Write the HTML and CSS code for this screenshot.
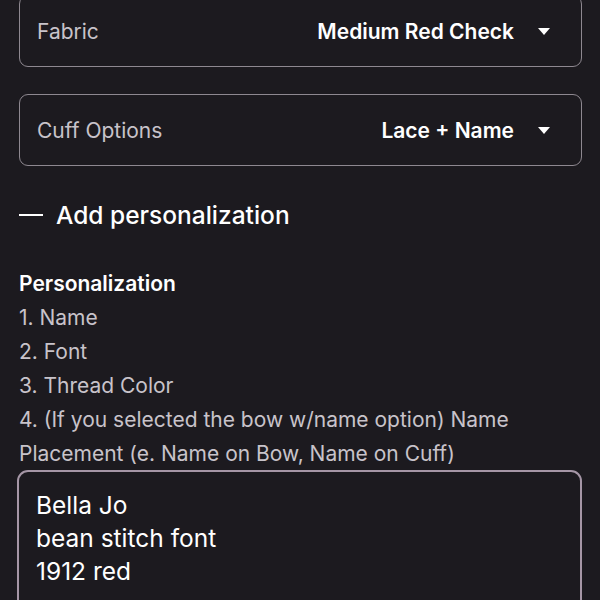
FILE: index.html
```html
<!DOCTYPE html>
<html>
<head>
<meta charset="utf-8">
<link rel="stylesheet" href="styles.css">
</head>
<body>
<div class="page">
  <div class="select first">
    <span class="label">Fabric</span>
    <span class="value">Medium Red Check<span class="caret"></span></span>
  </div>
  <div class="select">
    <span class="label">Cuff Options</span>
    <span class="value">Lace + Name<span class="caret"></span></span>
  </div>
  <div class="toggle">
    <span class="dash"></span>
    <span class="toggle-text">Add personalization</span>
  </div>
  <div class="field-title">Personalization</div>
  <div class="instructions">
    <div>1. Name</div>
    <div>2. Font</div>
    <div>3. Thread Color</div>
    <div>4. (If you selected the bow w/name option) Name Placement (e. Name on Bow, Name on Cuff)</div>
  </div>
  <div class="textarea">
    <div>Bella Jo</div>
    <div>bean stitch font</div>
    <div>1912 red</div>
  </div>
</div>
</body>
</html>
```
FILE: styles.css
```css
html, body {
  margin: 0;
  padding: 0;
  background: #1c1a1f;
  height: 100%;
  overflow: hidden;
}
.page {
  padding: 0 18px 0 19px;
  font-family: Inter, "Liberation Sans", Arial, sans-serif;
  color: #fff;
  margin-top: -5px;
}
.select {
  height: 70px;
  border: 1.3px solid #8e8890;
  border-radius: 9px;
  display: flex;
  align-items: center;
  justify-content: space-between;
  padding: 0 31px 0 17px;
  margin-bottom: 27px;
}
.label {
  font-size: 21px;
  color: #c8c3ca;
}
.value {
  font-size: 21px;
  font-weight: 600;
  color: #fff;
  display: flex;
  align-items: center;
}
.caret {
  display: inline-block;
  width: 0;
  height: 0;
  border-left: 6px solid transparent;
  border-right: 6px solid transparent;
  border-top: 7px solid #fff;
  margin-left: 24px;
}
.toggle {
  display: flex;
  align-items: center;
  padding-top: 2px;
  height: 40px;
}
.dash {
  width: 24px;
  height: 2px;
  background: #fff;
  margin-right: 13px;
}
.toggle-text {
  font-size: 24.5px;
  font-weight: 500;
}
.field-title {
  margin-top: 32px;
  font-size: 21px;
  font-weight: 600;
  line-height: 34px;
}
.instructions {
  font-size: 21px;
  line-height: 34px;
  color: #c8c3ca;
}
.textarea {
  margin-top: -1px;
  margin-left: -2px;
  border: 2px solid #a596a6;
  border-radius: 11px;
  padding: 17px 17px 30px;
  font-size: 24.5px;
  line-height: 33px;
  color: #fff;
}
```
